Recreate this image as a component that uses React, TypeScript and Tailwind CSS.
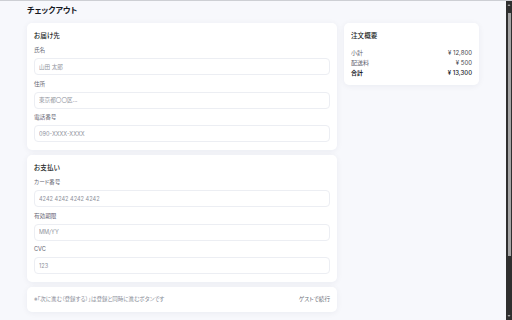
import React from "react";

const fields = {
  shipping: [
    { label: "氏名", placeholder: "山田 太郎" },
    { label: "住所", placeholder: "東京都〇〇区..." },
    { label: "電話番号", placeholder: "090-XXXX-XXXX" },
  ],
  payment: [
    { label: "カード番号", placeholder: "4242 4242 4242 4242" },
    { label: "有効期限", placeholder: "MM/YY" },
    { label: "CVC", placeholder: "123" },
  ],
};

const summary = [
  { label: "小計", value: "¥ 12,800" },
  { label: "配送料", value: "¥ 500" },
];

const Field: React.FC<{ label: string; placeholder: string }> = ({
  label,
  placeholder,
}) => (
  <div className="flex flex-col gap-[3px]">
    <label className="h-[9px] text-[5.6px] leading-[9px] text-[#5f6370]">
      {label}
    </label>
    <input
      readOnly
      placeholder={placeholder}
      className="h-[17px] w-full rounded-[4px] border border-[#eceef3] bg-white px-[4px] text-[5.6px] outline-none placeholder:text-[#8e929c]"
    />
  </div>
);

const Section: React.FC<{
  title: string;
  items: { label: string; placeholder: string }[];
}> = ({ title, items }) => (
  <section className="rounded-[5px] bg-white px-[7px] pt-[8px] pb-[8px] shadow-[0_1px_6px_rgba(20,30,60,0.06)]">
    <h2 className="mb-[4px] h-[11px] text-[6.6px] font-medium leading-[11px] text-[#1d1f27]">
      {title}
    </h2>
    <div className="flex flex-col gap-[4.5px]">
      {items.map((f) => (
        <Field key={f.label} label={f.label} placeholder={f.placeholder} />
      ))}
    </div>
  </section>
);

// Thin dark scrollbar as seen at the right edge of the window
const ScrollbarStrip: React.FC = () => (
  <div className="flex w-[6px] shrink-0 flex-col items-center bg-[#2f2f2f]">
    <svg width="6" height="6" viewBox="0 0 6 6" className="mt-[1px]">
      <path d="M1.5 4 L3 2 L4.5 4 Z" fill="#a4a4a4" />
    </svg>
    <div className="mt-[5px] h-[243px] w-[3px] bg-[#a4a4a4]" />
    <div className="flex-1" />
    <svg width="6" height="6" viewBox="0 0 6 6" className="mb-[1px]">
      <path d="M1.5 2 L3 4 L4.5 2 Z" fill="#a4a4a4" />
    </svg>
  </div>
);

export default function App() {
  return (
    <div className="flex h-[320px] border-t border-[#cdcfd4] bg-[#f7f8fc] [font-family:Inter,'Noto_Sans_CJK_JP',sans-serif] [font-feature-settings:'palt']">
      <div className="flex-1 overflow-hidden px-[27px] pt-[4px]">
        <h1 className="mb-[8px] h-[10px] text-[8px] font-bold leading-[10px] text-[#16181f]">
          チェックアウト
        </h1>

        <div className="flex items-start gap-[7px]">
          {/* Left column: forms */}
          <div className="flex w-[310px] flex-col gap-[5px]">
            <Section title="お届け先" items={fields.shipping} />
            <Section title="お支払い" items={fields.payment} />

            <div className="flex h-[25px] items-center justify-between rounded-[5px] bg-white px-[7px] shadow-[0_1px_6px_rgba(20,30,60,0.06)]">
              <p className="text-[5.5px] text-[#8a8e98]">
                ※「次に進む（登録する）」は登録と同時に進むボタンです
              </p>
              <button className="text-[5.6px] text-[#6a6e78]">
                ゲストで続行
              </button>
            </div>
          </div>

          {/* Right column: summary */}
          <aside className="flex-1 rounded-[5px] bg-white px-[7px] pt-[8px] pb-[8px] shadow-[0_1px_6px_rgba(20,30,60,0.06)]">
            <h2 className="mb-[5px] h-[11px] text-[6.6px] font-medium leading-[11px] text-[#1d1f27]">
              注文概要
            </h2>
            {summary.map((row) => (
              <div
                key={row.label}
                className="flex h-[10px] items-center justify-between text-[6px] text-[#5f6370]"
              >
                <span>{row.label}</span>
                <span className="text-[#3f434d]">{row.value}</span>
              </div>
            ))}
            <div className="flex h-[10px] items-center justify-between text-[6px] font-bold text-[#16181f]">
              <span>合計</span>
              <span className="font-medium">¥ 13,300</span>
            </div>
          </aside>
        </div>
      </div>
      <ScrollbarStrip />
    </div>
  );
}
